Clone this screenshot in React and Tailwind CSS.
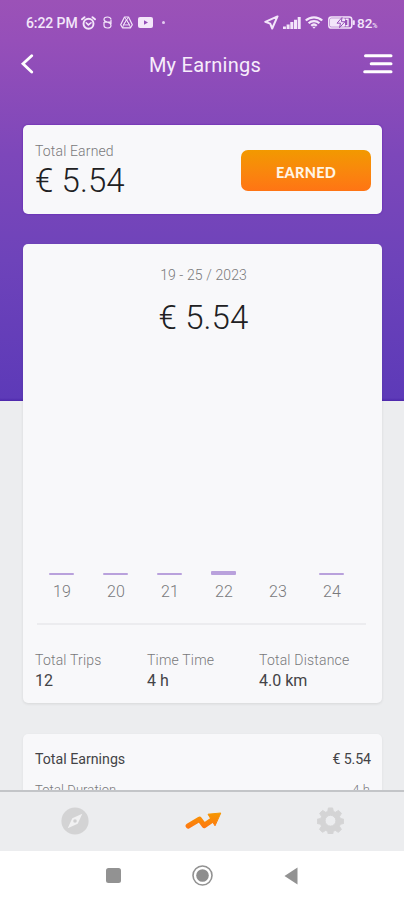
const days = [
    { label: '19', height: 2 },
    { label: '20', height: 2 },
    { label: '21', height: 2 },
    { label: '22', height: 4 },
    { label: '23', height: 0 },
    { label: '24', height: 2 },
];

const stats = [
    { label: 'Total Trips', value: '12' },
    { label: 'Time Time', value: '4 h' },
    { label: 'Total Distance', value: '4.0 km' },
];

function StatusBar() {
    return (
        <div className="flex h-[45px] shrink-0 items-center pl-[26px] pr-[25px] text-[#f3e6fa]">
            <span className="w-[54px] whitespace-nowrap pt-px text-[14px] font-medium tracking-[-0.1px]">6:22 PM</span>

            {/* Alarm */}
            <svg className="ml-px h-[14px] w-[15px]" viewBox="0 0 15 14" fill="none" stroke="currentColor" strokeLinecap="round">
                <circle cx="7.5" cy="7.7" r="5" strokeWidth="1.9" />
                <path d="M1 3.3 3.5 1.2M14 3.3 11.5 1.2" strokeWidth="1.9" />
                <path d="M5.2 6.8 7.3 8.9 10 6.8" strokeWidth="1.5" />
            </svg>
            {/* Shield */}
            <svg className="ml-[7px] h-[13px] w-[9px]" viewBox="0 0 9 13" fill="none" stroke="currentColor">
                <path d="M8 3.2C7.6 1.7 6.2 1 4.5 1S1 1.8 1 3.5s1.2 2 3.5 2.7S8 7.8 8 9.2 6.6 12 4.5 12 1 10.8 1 9.3V6M8 3.4V8M1 6.2h7" strokeWidth="1.2" />
            </svg>
            {/* Drive */}
            <svg className="ml-[8px] h-[13px] w-[13px]" viewBox="0 0 13 13" fill="none" stroke="currentColor" strokeLinejoin="round">
                <path d="M4.5 1h4l3.8 7.7-1.8 3.1h-8L.7 8.7z" strokeWidth="1.2" />
                <path d="m6.5 3.7 3 5.2h-6zM4.5 1l5 7.9M8.5 1l-5 7.9M3.5 9l-1 2.8M9.5 9l1 2.8" strokeWidth=".9" />
            </svg>
            {/* YouTube */}
            <svg className="ml-[5px] h-[11px] w-[15px]" viewBox="0 0 15 11">
                <rect width="15" height="11" rx="2" fill="currentColor" />
                <path d="m6 3.2 4 2.3-4 2.3z" fill="#934db8" />
            </svg>
            <span className="ml-[9px] h-[3px] w-[3px] rounded-full bg-[#e3cdf0]" />

            {/* Location */}
            <svg className="ml-auto h-[15px] w-[15px]" viewBox="0 0 15 15" fill="none" stroke="currentColor" strokeWidth="2" strokeLinejoin="round">
                <path d="M13.5 1.4 1.3 6.8l4.9 1.8 2 4.9z" />
            </svg>
            {/* Signal */}
            <svg className="ml-[4px] h-[12px] w-[18px]" viewBox="0 0 18 12" fill="currentColor">
                <path d="M0 9.5h2.9V12H0zM3.6 7.5h3V12h-3zM7.3 5h3v7h-3zM11 2.7h3V12h-3zM14.7 0h3v12h-3z" />
            </svg>
            {/* Wifi */}
            <svg className="ml-[4px] h-[13px] w-[18px]" viewBox="0 0 18 13" fill="none" stroke="currentColor" strokeWidth="2.2">
                <path d="M.8 4.5C5.2.2 12.8.2 17.2 4.5M3.6 7.2c3-2.9 7.8-2.9 10.8 0M6.2 9.8c1.6-1.5 4-1.5 5.6 0" />
                <path d="m7.2 10.7 1.8 2 1.8-2z" fill="currentColor" stroke="none" />
            </svg>
            {/* Battery */}
            <svg className="ml-[5px] h-[13px] w-[27px]" viewBox="0 0 27 13">
                <rect x=".8" y=".9" width="23" height="11.2" rx="2.6" fill="none" stroke="currentColor" strokeWidth="1.5" />
                <rect x="2" y="2.2" width="15" height="8.6" rx="1" fill="currentColor" />
                <rect x="24.6" y="4.2" width="2.2" height="4.8" rx=".8" fill="currentColor" />
                <path d="m14 1.5-5 5.7h3.5l-1 4.5 5.5-6h-3.6z" fill="currentColor" stroke="#9650b8" strokeWidth="1" />
                <path d="M17.5 3.3H20v6.4h-2.5" fill="none" stroke="currentColor" strokeWidth="1.4" />
            </svg>
            <span className="ml-[2px] w-[22px] whitespace-nowrap pt-px text-[13.5px] font-medium">
                82<span className="text-[7px]">%</span>
            </span>
        </div>
    );
}

function Header() {
    return (
        <header className="flex h-[38px] shrink-0 items-center justify-between pl-[20px] pr-[11px] text-white">
            <svg className="h-[20px] w-[14px]" viewBox="0 0 14 20" fill="none" stroke="currentColor" strokeWidth="2.8" strokeLinecap="round">
                <path d="M11.7 1.8 3 9.8l8.7 8.3" />
            </svg>
            <h1 className="ml-[13px] pt-px text-[20px] tracking-[0.25px] text-[#f7edfb]">My Earnings</h1>
            <svg className="h-[20px] w-[30px]" viewBox="0 0 30 20" stroke="currentColor" strokeWidth="3" strokeLinecap="round">
                <path d="M2.5 1.8h25.5M8.2 9.8H28M1.7 17.8H28" />
            </svg>
        </header>
    );
}

function TabBar() {
    return (
        <nav className="flex h-[61px] shrink-0 items-center border-t-2 border-[#c3c5c8] bg-[#ecedef] pb-[2px]">
            <svg className="ml-[61px] h-[28px] w-[28px]" viewBox="0 0 28 28">
                <circle cx="14" cy="14" r="13.6" fill="#d3d3d4" />
                <path d="M21.3 6.7 16.7 16.7 6.7 21.3 11.3 11.3z" fill="#f1f1f2" />
                <circle cx="14" cy="14" r="1.8" fill="#cfcfd0" />
            </svg>
            <svg className="ml-[96px] h-[18px] w-[37px]" viewBox="0 0 37 18">
                <defs>
                    <linearGradient id="trend" x1="0" y1="0" x2="0" y2="18" gradientUnits="userSpaceOnUse">
                        <stop offset="0" stopColor="#f59a00" />
                        <stop offset="1" stopColor="#ff7313" />
                    </linearGradient>
                </defs>
                <path d="M3.2 14 14.5 7.2 19.2 13.5 28 7.5" fill="none" stroke="url(#trend)" strokeWidth="5.2" strokeLinecap="round" strokeLinejoin="round" />
                <path d="M23 2.2 35.8 1 30 13.8z" fill="url(#trend)" stroke="url(#trend)" strokeLinejoin="round" />
            </svg>
            <svg className="ml-[95px] h-[27px] w-[27px]" viewBox="0 0 28 28" fill="#d4d4d5">
                <path
                    fillRule="evenodd"
                    stroke="#d4d4d5"
                    strokeLinejoin="round"
                    d="M11.8 1h4.4l.8 3.6 2.1.9 3.2-2 3.1 3.1-2 3.2.9 2.1 3.4.8v4.4l-3.5.8-.9 2.1 2 3.2-3.1 3.1-3.2-2-2.1.9-.7 3.5h-4.4l-.8-3.5-2.1-.9-3.2 2-3.1-3.1 2-3.2-.9-2.1-3.5-.8v-4.4l3.6-.8.9-2.1-2-3.2 3.1-3.1 3.2 2 2.1-.9zM14 8.6a5.6 5.6 0 1 0 0 11.2 5.6 5.6 0 0 0 0-11.2z"
                />
            </svg>
        </nav>
    );
}

function SystemNav() {
    return (
        <div className="flex h-[49px] shrink-0 items-center bg-white pl-[106px]">
            <span className="h-[15px] w-[15px] rounded-[2.5px] bg-[#929292]" />
            <svg className="ml-[71px] h-[21px] w-[21px]" viewBox="0 0 21 21">
                <circle cx="10.5" cy="10.5" r="9.5" fill="none" stroke="#929292" strokeWidth="1.6" />
                <circle cx="10.5" cy="10.5" r="6.3" fill="#8e8e8e" />
            </svg>
            <svg className="ml-[71px] h-[18px] w-[14px]" viewBox="0 0 14 18">
                <path d="M13.5.5v17L.5 9z" fill="#929292" />
            </svg>
        </div>
    );
}

export default function App() {
    return (
        <div className="flex h-[900px] w-[404px] flex-col overflow-hidden bg-[#ecedef] bg-[linear-gradient(to_bottom,#9b52b7_0px,#964fb9_40px,#7d47ba_155px,#6e43ba_260px,#5d3ab8_398px,#4d27ab_401px,#ecedef_401px)] font-[Roboto,sans-serif]">
            <StatusBar />
            <Header />

            <main className="min-h-0 flex-1 overflow-hidden pl-[23px] pr-[22px] pt-[42px]">
                {/* Balance */}
                <section className="flex h-[89px] items-center justify-between rounded-[5px] bg-[#f8f8fa] pl-3 pr-[11px] shadow-[0_0_2px_#5c18ae]">
                    <div className="pt-[4px]">
                        <p className="text-[14px] font-light leading-[18px] tracking-[0.15px] text-[#79797b]">Total Earned</p>
                        <p className="text-[33px] font-light leading-[42px] tracking-[0.1px] text-[#202022]">€ 5.54</p>
                    </div>
                    <button className="mt-px h-[41px] w-[130px] rounded-[7px] bg-linear-to-b from-[#f29900] to-[#ff7414] pt-[5px] font-[Lato,sans-serif] text-[14.5px] font-black tracking-[0.25px] text-[#fff4e4]">
                        EARNED
                    </button>
                </section>

                {/* Weekly chart */}
                <section className="mt-[30px] flex h-[459px] flex-col rounded-[5px] bg-[#f8f8fa] px-3 shadow-[0_1px_3px_#00000018]">
                    <div className="pl-[2px] pt-[22px] text-center">
                        <p className="text-[14px] font-light leading-[18px] tracking-[0.1px] text-[#79797b]">19 - 25 / 2023</p>
                        <p className="mt-[13px] text-[33px] font-light leading-[42px] tracking-[0.1px] text-[#202022]">€ 5.54</p>
                    </div>
                    <div className="mt-auto flex pl-[14px]">
                        {days.map((day) => (
                            <div key={day.label} className="flex w-[54px] shrink-0 flex-col items-start justify-end">
                                <div className="w-[25px] rounded-[1px] bg-[#b9a1dc]" style={{ height: day.height }} />
                                <span className="mt-[7px] w-[26px] text-center text-[16px] font-light leading-5 tracking-[0.2px] text-[#79797c]">{day.label}</span>
                            </div>
                        ))}
                    </div>
                    <hr className="ml-[2px] mr-1 mt-[21px] border-t-2 border-[#ececef]" />
                    <div className="mb-[12px] mt-[25px] flex">
                        {stats.map((stat) => (
                            <div key={stat.label} className="w-28 shrink-0">
                                <p className="whitespace-nowrap text-[14px] font-light leading-5 tracking-[0.2px] text-[#79797b]">{stat.label}</p>
                                <p className="pt-px text-[16px] leading-5 text-[#434346]">{stat.value}</p>
                            </div>
                        ))}
                    </div>
                </section>

                {/* Summary, continues under the tab bar */}
                <section className="mt-[31px] h-[120px] rounded-[5px] bg-[#f8f8fa] px-3 pt-[15px] shadow-[0_1px_3px_#00000010]">
                    <div className="flex justify-between text-[14.2px] leading-5 text-[#434346]">
                        <span>Total Earnings</span>
                        <span className="-mr-px tracking-[-0.1px]">€ 5.54</span>
                    </div>
                    <div className="mt-[11px] flex justify-between text-[13px] font-light leading-5 tracking-[0.1px] text-[#79797b]">
                        <span>Total Duration</span>
                        <span>4 h</span>
                    </div>
                </section>
            </main>

            <TabBar />
            <SystemNav />
        </div>
    );
}
